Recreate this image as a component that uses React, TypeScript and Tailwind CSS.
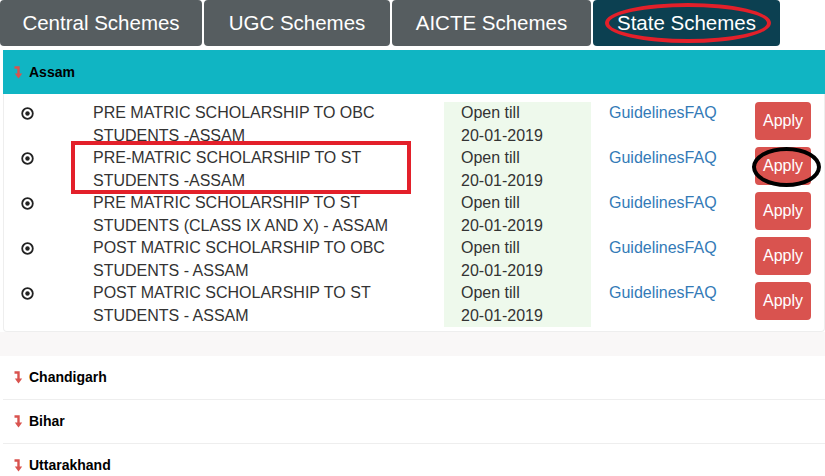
import React from 'react'

const tabs = [
    { label: 'Central Schemes', w: 'w-[202px]', active: false },
    { label: 'UGC Schemes', w: 'w-[186px]', active: false },
    { label: 'AICTE Schemes', w: 'w-[199px]', active: false },
    { label: 'State Schemes', w: 'w-[187px]', active: true },
]

const schemes = [
    ['PRE MATRIC SCHOLARSHIP TO OBC', 'STUDENTS -ASSAM'],
    ['PRE-MATRIC SCHOLARSHIP TO ST', 'STUDENTS -ASSAM'],
    ['PRE MATRIC SCHOLARSHIP TO ST', 'STUDENTS (CLASS IX AND X) - ASSAM'],
    ['POST MATRIC SCHOLARSHIP TO OBC', 'STUDENTS - ASSAM'],
    ['POST MATRIC SCHOLARSHIP TO ST', 'STUDENTS - ASSAM'],
]

const LevelDown = () => (
    <svg width="9" height="13" viewBox="0 0 9 13" className="shrink-0">
        <path d="M0.5 1.5 H4.5 V8" stroke="#d9534f" strokeWidth="2.4" fill="none" />
        <path d="M0.8 7.5 L8.2 7.5 L4.5 12.5 Z" fill="#d9534f" />
    </svg>
)

const Record = () => (
    <svg width="13" height="13" viewBox="0 0 13 13">
        <circle cx="6.5" cy="6.5" r="5.3" stroke="#222" strokeWidth="1.8" fill="none" />
        <circle cx="6.5" cy="6.5" r="2.2" fill="#222" />
    </svg>
)

const App = () => {
    return (
        <div className="relative w-[825px] h-[476px] overflow-hidden bg-white font-['Liberation_Sans',Arial,sans-serif]">
            <div className="flex gap-[2px] h-[46px]">
                {tabs.map((t) => (
                    <div
                        key={t.label}
                        className={`${t.w} h-full rounded-[4px] flex items-center justify-center text-[20.5px] text-white ${t.active ? 'bg-[#0c4051]' : 'bg-[#565d60]'}`}
                    >
                        {t.label}
                    </div>
                ))}
            </div>

            <div className="mt-[4px] ml-[3px] h-[44px] bg-[#10b5c3] flex items-center pl-[11px] gap-[6px]">
                <LevelDown />
                <span className="text-[14px] font-bold text-black">Assam</span>
            </div>

            <div className="ml-[3px] border border-[#eee] border-t-0 rounded-b-[4px] pt-[8px] pb-[4px]">
                {schemes.map((s, i) => (
                    <div key={i} className="flex h-[45px] text-[16px] leading-[22.5px]">
                        <div className="w-[89px] pl-[17px] pt-[5px]">
                            <Record />
                        </div>
                        <div className="w-[351px] text-[#333] whitespace-nowrap">
                            <div>{s[0]}</div>
                            <div>{s[1]}</div>
                        </div>
                        <div className="w-[147px] bg-[#eef9ec] pl-[17px] text-[#333]">
                            <div>Open till</div>
                            <div>20-01-2019</div>
                        </div>
                        <div className="w-[164px] pl-[18px] text-[#337ab7]">GuidelinesFAQ</div>
                        <div>
                            <button className="w-[56px] h-[38px] rounded-[4px] bg-[#d9534f] text-white text-[16px]">Apply</button>
                        </div>
                    </div>
                ))}
            </div>

            <div className="h-[24px] bg-[#f9f7f7]" />

            {['Chandigarh', 'Bihar', 'Uttarakhand'].map((st) => (
                <div key={st} className="ml-[3px] h-[44px] border-b border-[#eee] bg-white flex items-center pl-[11px] gap-[6px]">
                    <LevelDown />
                    <span className="text-[14px] font-bold text-black">{st}</span>
                </div>
            ))}

            {/* annotations drawn over the screenshot */}
            <div className="absolute left-[605px] top-[3px] w-[166px] h-[40px] rounded-[50%] border-[4px] border-[#e3202a]" />
            <div className="absolute left-[71px] top-[141px] w-[340px] h-[53px] border-[4px] border-[#e3202a]" />
            <div className="absolute left-[752px] top-[147px] w-[69px] h-[40px] rounded-[50%] border-[4px] border-black" />
        </div>
    )
}

export default App
